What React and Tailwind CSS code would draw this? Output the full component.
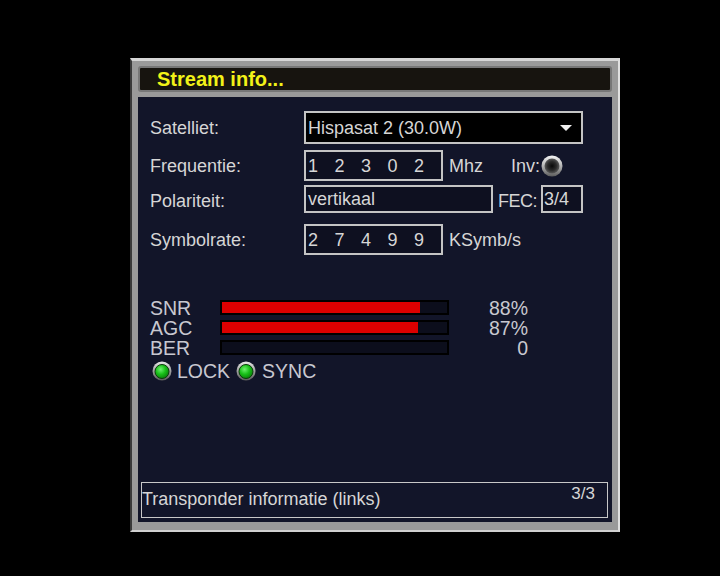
import React from 'react';

const font = { fontFamily: '"Liberation Sans", Arial, sans-serif' };

function Led() {
  return (
    <svg width="20" height="20" viewBox="0 0 20 20" className="shrink-0">
      <defs>
        <linearGradient id="ledRing" x1="0" y1="0" x2="0" y2="1">
          <stop offset="0" stopColor="#e8e8e8" />
          <stop offset="1" stopColor="#5a5a5a" />
        </linearGradient>
        <radialGradient id="ledGreen" cx="0.4" cy="0.35" r="0.7">
          <stop offset="0" stopColor="#6cf06c" />
          <stop offset="0.5" stopColor="#18c018" />
          <stop offset="1" stopColor="#087a08" />
        </radialGradient>
      </defs>
      <circle cx="10" cy="10" r="9.5" fill="url(#ledRing)" />
      <circle cx="10" cy="10.5" r="7" fill="url(#ledGreen)" stroke="#0b3a0b" strokeWidth="1" />
    </svg>
  );
}

function InvKnob() {
  return (
    <svg width="22" height="22" viewBox="0 0 22 22" className="shrink-0">
      <defs>
        <linearGradient id="knobRing" x1="0" y1="0" x2="0" y2="1">
          <stop offset="0" stopColor="#f4f4f4" />
          <stop offset="0.5" stopColor="#b4b4b4" />
          <stop offset="1" stopColor="#5c5c5c" />
        </linearGradient>
        <radialGradient id="knobCore" cx="0.5" cy="0.5" r="0.5">
          <stop offset="0" stopColor="#080808" />
          <stop offset="0.6" stopColor="#2c2c2c" />
          <stop offset="1" stopColor="#5a5a5a" />
        </radialGradient>
      </defs>
      <circle cx="11" cy="11" r="10.5" fill="url(#knobRing)" />
      <circle cx="11" cy="11" r="7.5" fill="url(#knobCore)" />
    </svg>
  );
}

function Digits({ value }) {
  return (
    <div className="grid grid-cols-[repeat(5,26.5px)] pl-[2px]">
      {value.split('').map((d, i) => (
        <span key={i}>{d}</span>
      ))}
    </div>
  );
}

function Bar({ pct }) {
  return (
    <div className="w-[229px] h-[15px] border-2 border-black bg-[#0c0e1c] mt-[2px]">
      <div className="h-full bg-[#dc0000]" style={{ width: `${pct}%` }} />
    </div>
  );
}

export default function App() {
  const signals = [
    { name: 'SNR', pct: 88, text: '88%' },
    { name: 'AGC', pct: 87, text: '87%' },
    { name: 'BER', pct: 0, text: '0' },
  ];

  return (
    <div className="w-[720px] h-[576px] bg-black overflow-hidden pt-[58px]" style={font}>
      {/* outer grey frame */}
      <div className="ml-[130px] w-[490px] h-[474px] flex flex-col bg-[#9a9a9a] border-t-[3px] border-t-[#d6d6d6] border-x-2 border-l-[#3a3a3a] border-r-[#e0e0e0] border-b-2 border-b-[#d0d0d0] px-[6px] pb-[8px]">
        {/* title bar */}
        <div className="mt-[5px] h-[26px] rounded-[3px] border-2 border-[#777777] bg-[#17140f] flex items-center pl-[17px]">
          <span className="text-[20px] font-bold text-[#f2f218] leading-none">Stream info...</span>
        </div>

        {/* content */}
        <div className="mt-[5px] h-[425px] bg-[#121529] flex flex-col text-[18px] text-[#d6d6d6]">
          <div className="flex flex-col pt-[14px] pl-[12px] leading-[20px]">
            {/* Satelliet */}
            <div className="flex items-center h-[33px]">
              <span className="w-[154px]">Satelliet:</span>
              <div className="w-[279px] h-full bg-black border-2 border-[#c4c4c4] flex items-center justify-between pl-[2px] pr-[9px]">
                <span>Hispasat 2 (30.0W)</span>
                <svg width="12" height="6" viewBox="0 0 12 6">
                  <polygon points="0,0 12,0 6,6" fill="#f0f0f0" />
                </svg>
              </div>
            </div>

            {/* Frequentie */}
            <div className="flex items-center h-[31px] mt-[6px]">
              <span className="w-[154px]">Frequentie:</span>
              <div className="w-[139px] h-full bg-[#0e1020] border-2 border-[#c4c4c4] flex items-center">
                <Digits value="12302" />
              </div>
              <span className="ml-[6px]">Mhz</span>
              <span className="ml-[28px]">Inv:</span>
              <span className="ml-[1px]"><InvKnob /></span>
            </div>

            {/* Polariteit */}
            <div className="flex items-center h-[28px] mt-[4px]">
              <span className="w-[154px] mt-[4px]">Polariteit:</span>
              <div className="w-[189px] h-full bg-[#0e1020] border-2 border-[#c4c4c4] flex items-center pl-[2px]">
                vertikaal
              </div>
              <span className="w-[48px] pl-[5px] mt-[4px] tracking-[-0.5px]">FEC:</span>
              <div className="w-[42px] h-full bg-[#0e1020] border-2 border-[#c4c4c4] flex items-center pl-[1px]">
                3/4
              </div>
            </div>

            {/* Symbolrate */}
            <div className="flex items-center h-[31px] mt-[11px]">
              <span className="w-[154px]">Symbolrate:</span>
              <div className="w-[139px] h-full bg-[#0e1020] border-2 border-[#c4c4c4] flex items-center">
                <Digits value="27499" />
              </div>
              <span className="ml-[6px]">KSymb/s</span>
            </div>

            {/* signal bars */}
            <div className="mt-[43px] grid grid-cols-[70px_229px_79px] text-[19.5px] text-[#c8c8d0] leading-[20px]">
              {signals.map((s) => (
                <React.Fragment key={s.name}>
                  <span className="h-[20px]">{s.name}</span>
                  <Bar pct={s.pct} />
                  <span className="text-right">{s.text}</span>
                </React.Fragment>
              ))}
            </div>

            <div className="flex items-center mt-[3px] ml-[2px] text-[19.5px] text-[#c8c8d0] leading-[20px]">
              <Led />
              <span className="ml-[5px]">LOCK</span>
              <span className="ml-[6px]"><Led /></span>
              <span className="ml-[6px]">SYNC</span>
            </div>
          </div>

          {/* status line */}
          <div className="mt-auto mb-[4px] ml-[3px] w-[467px] h-[36px] border border-[#c8c8c8] flex justify-between leading-[20px]">
            <span className="pt-[6px]">Transponder informatie (links)</span>
            <span className="pt-[1px] pr-[12px] text-[17px]">3/3</span>
          </div>
        </div>
      </div>
    </div>
  );
}
